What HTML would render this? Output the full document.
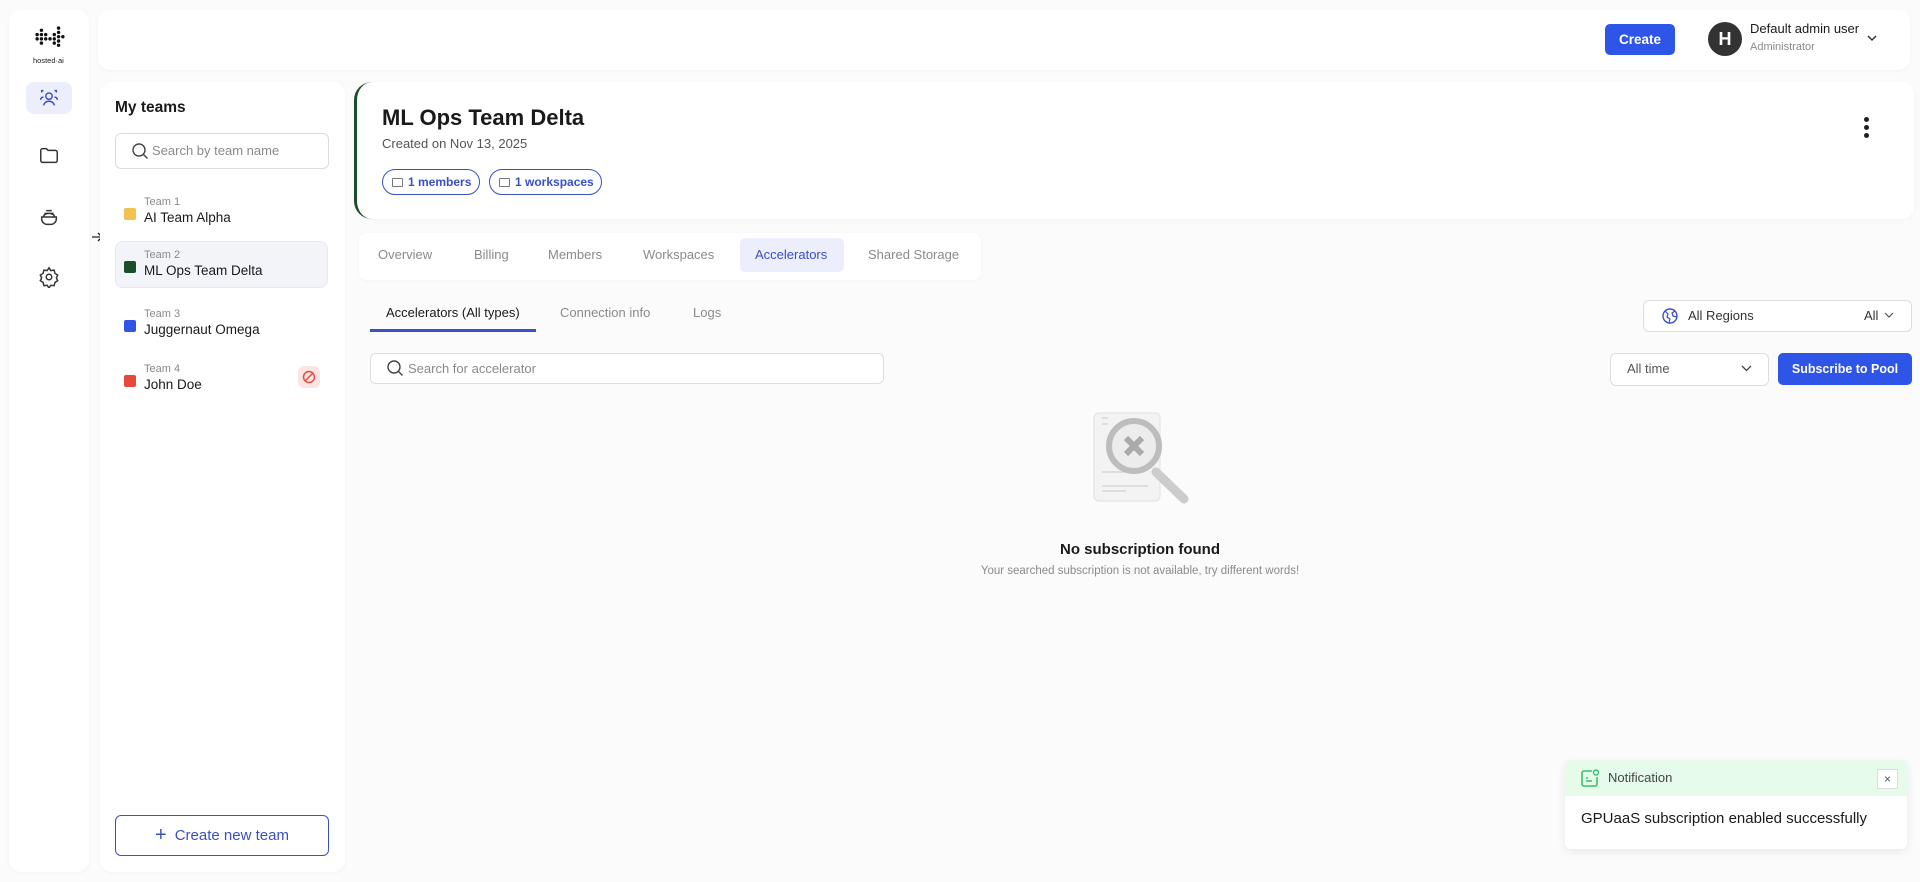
<!DOCTYPE html>
<html><head><meta charset="utf-8"><style>
*{box-sizing:border-box;margin:0;padding:0}
body{width:1920px;height:882px;background:#fbfbfb;font-family:"Liberation Sans",sans-serif;color:#1a1a1a;position:relative;overflow:hidden}
.abs{position:absolute}
.card{position:absolute;background:#fff;border-radius:12px;box-shadow:0 1px 4px rgba(0,0,0,.04)}
.muted{color:#8a8a8a}
.ri{position:absolute;left:26px;width:46px;height:32px;display:flex;align-items:center;justify-content:center;border-radius:8px}
.team{position:absolute;left:115px;width:213px;height:47px;border-radius:8px}
.team .sq{position:absolute;left:9px;top:20px;width:12px;height:12px;border-radius:2px}
.team .t1{position:absolute;left:29px;top:8px;font-size:11px;color:#8a8a8a}
.team .t2{position:absolute;left:29px;top:22px;font-size:13.5px;color:#1a1a1a}
.tab{position:absolute;top:247px;font-size:13px;color:#8a8a8a}
.chip{position:absolute;top:169px;height:26px;border:1px solid #3a4fc8;border-radius:14px;color:#3a4fc8;font-size:12px;font-weight:bold;display:flex;align-items:center;padding-left:9px;gap:5px}
.chip i{display:inline-block;width:11px;height:9px;border:1px solid #777;border-radius:1px}
</style></head><body>
<div class="card" style="left:9px;top:10px;width:80px;height:862px"></div>
<svg class="abs" style="left:32px;top:26px" width="36" height="30" viewBox="0 0 32 28" fill="#111">
<g><circle cx="4" cy="8" r="1.6"/><circle cx="8" cy="4" r="1.6"/><circle cx="8" cy="8" r="1.6"/><circle cx="8" cy="12" r="1.6"/><circle cx="8" cy="16" r="1.6"/><circle cx="12" cy="8" r="1.6"/><circle cx="16" cy="12" r="1.6"/><circle cx="20" cy="8" r="1.6"/><circle cx="20" cy="12" r="1.6"/><circle cx="20" cy="16" r="1.6"/><circle cx="24" cy="2" r="1.6"/><circle cx="24" cy="6" r="1.6"/><circle cx="24" cy="10" r="1.6"/><circle cx="24" cy="14" r="1.6"/><circle cx="24" cy="18" r="1.6"/><circle cx="28" cy="10" r="1.6"/><circle cx="4" cy="12" r="1.6"/><circle cx="12" cy="12" r="1.6"/></g></svg>
<div class="abs" style="left:33px;top:56px;font-size:7.5px;color:#222">hosted·ai</div>
<div class="ri" style="top:82px;background:#eceefb"><svg width="22" height="22" viewBox="0 0 24 24" fill="none" stroke="#3a4fc8" stroke-width="1.6"><circle cx="12" cy="10" r="3.5"/><path d="M6 20c1-3 3.5-4.5 6-4.5s5 1.5 6 4.5M4 6V4h2M20 6V4h-2M3 14c0-2 1-3 3-3M21 14c0-2-1-3-3-3"/></svg></div>
<div class="ri" style="top:139px"><svg width="22" height="22" viewBox="0 0 24 24" fill="none" stroke="#333" stroke-width="1.6"><path d="M3 7a2 2 0 0 1 2-2h4l2 2h8a2 2 0 0 1 2 2v9a2 2 0 0 1-2 2H5a2 2 0 0 1-2-2z"/></svg></div>
<div class="ri" style="top:201px"><svg width="22" height="22" viewBox="0 0 24 24" fill="none" stroke="#333" stroke-width="1.6"><path d="M4 12h16v2a6 6 0 0 1-6 6h-4a6 6 0 0 1-6-6zM6 12a6 4 0 0 1 12 0M7 8h10M9 5h6"/></svg></div>
<div class="ri" style="top:261px"><svg width="22" height="22" viewBox="0 0 24 24" fill="none" stroke="#333" stroke-width="1.6"><circle cx="12" cy="12" r="3"/><path d="M12 2l2 3 3.5-.5 1 3.5 3 2-1.5 3 1.5 3-3 2-1 3.5-3.5-.5-2 3-2-3-3.5.5-1-3.5-3-2 1.5-3-1.5-3 3-2 1-3.5 3.5.5z"/></svg></div>
<svg class="abs" style="left:91px;top:231px" width="16" height="12" viewBox="0 0 16 12"><path d="M1 6h10M7 2l4 4-4 4M14 1v10" stroke="#222" stroke-width="1.3" fill="none"/></svg>
<div class="card" style="left:98px;top:10px;width:1812px;height:60px"></div>
<div class="abs" style="left:1605px;top:24px;width:70px;height:31px;background:#2f55e8;border-radius:5px;color:#fff;font-size:13.5px;font-weight:bold;display:flex;align-items:center;justify-content:center">Create</div>
<div class="abs" style="left:1708px;top:22px;width:34px;height:34px;border-radius:50%;background:#333;color:#fff;font-weight:bold;font-size:18px;display:flex;align-items:center;justify-content:center">H</div>
<div class="abs" style="left:1750px;top:21px;font-size:13px">Default admin user</div>
<div class="abs muted" style="left:1750px;top:41px;font-size:11px">Administrator</div>
<svg class="abs" style="left:1866px;top:34px" width="12" height="8" viewBox="0 0 12 8"><path d="M2 2l4 4 4-4" stroke="#333" stroke-width="1.5" fill="none"/></svg>
<div class="card" style="left:100px;top:82px;width:245px;height:790px"></div>
<div class="abs" style="left:115px;top:99px;font-size:15.5px;font-weight:bold">My teams</div>
<div class="abs" style="left:115px;top:133px;width:214px;height:36px;border:1px solid #ddd;border-radius:6px"></div>
<svg class="abs" style="left:131px;top:142px" width="18" height="18" viewBox="0 0 18 18"><circle cx="8" cy="8" r="6" stroke="#444" stroke-width="1.4" fill="none"/><path d="M12.5 12.5l4 4" stroke="#444" stroke-width="1.4"/></svg>
<div class="abs muted" style="left:152px;top:143px;font-size:13px">Search by team name</div>
<div class="team" style="top:188px"><div class="sq" style="background:#f2c24f"></div><div class="t1">Team 1</div><div class="t2">AI Team Alpha</div></div>
<div class="team" style="top:241px;background:#f2f4fa;border:1px solid #e6e8f0"><div class="sq" style="background:#1b4d2a;left:8px;top:19px"></div><div class="t1" style="left:28px;top:7px">Team 2</div><div class="t2" style="left:28px;top:21px">ML Ops Team Delta</div></div>
<div class="team" style="top:300px"><div class="sq" style="background:#2f55e8"></div><div class="t1">Team 3</div><div class="t2">Juggernaut Omega</div></div>
<div class="team" style="top:355px"><div class="sq" style="background:#e8473c"></div><div class="t1">Team 4</div><div class="t2">John Doe</div>
<div class="abs" style="left:183px;top:11px;width:22px;height:22px;border-radius:6px;background:#fde4e4"><svg width="22" height="22" viewBox="0 0 22 22"><circle cx="11" cy="11" r="5.5" stroke="#e8473c" stroke-width="1.4" fill="none"/><path d="M7 15l8-8" stroke="#e8473c" stroke-width="1.4"/></svg></div></div>
<div class="abs" style="left:115px;top:815px;width:214px;height:41px;border:1px solid #3a4fc8;border-radius:6px;color:#3a4fc8;font-size:15px;display:flex;align-items:center;justify-content:center"><span style="font-size:20px;margin-right:8px">+</span>Create new team</div>
<div class="card" style="left:354px;top:82px;width:1560px;height:137px;border-left:3px solid #1b4d2a;border-radius:18px 12px 12px 18px"></div>
<div class="abs" style="left:382px;top:105px;font-size:22px;font-weight:bold">ML Ops Team Delta</div>
<div class="abs" style="left:382px;top:136px;font-size:13px;color:#555">Created on Nov 13, 2025</div>
<div class="chip" style="left:382px;width:98px"><i></i>1 members</div>
<div class="chip" style="left:489px;width:113px"><i></i>1 workspaces</div>
<div class="abs" style="left:1864px;top:117px;width:5px"><div style="width:5px;height:5px;border-radius:50%;background:#222;margin-bottom:3px"></div><div style="width:5px;height:5px;border-radius:50%;background:#222;margin-bottom:3px"></div><div style="width:5px;height:5px;border-radius:50%;background:#222"></div></div>
<div class="card" style="left:359px;top:233px;width:622px;height:47px;border-radius:8px"></div>
<div class="abs" style="left:740px;top:238px;width:104px;height:34px;background:#eceefb;border-radius:5px"></div>
<div class="tab" style="left:378px">Overview</div>
<div class="tab" style="left:474px">Billing</div>
<div class="tab" style="left:548px">Members</div>
<div class="tab" style="left:643px">Workspaces</div>
<div class="tab" style="left:755px;color:#3a4fc8">Accelerators</div>
<div class="tab" style="left:868px">Shared Storage</div>
<div class="abs" style="left:386px;top:305px;font-size:13px">Accelerators (All types)</div>
<div class="abs muted" style="left:560px;top:305px;font-size:13px">Connection info</div>
<div class="abs muted" style="left:693px;top:305px;font-size:13px">Logs</div>
<div class="abs" style="left:370px;top:329px;width:166px;height:3px;background:#3a4fc8"></div>
<div class="abs" style="left:1643px;top:300px;width:269px;height:32px;border:1px solid #ddd;border-radius:6px;background:#fff"></div>
<svg class="abs" style="left:1661px;top:307px" width="18" height="18" viewBox="0 0 18 18"><circle cx="9" cy="9" r="7" stroke="#3a4fc8" stroke-width="1.4" fill="none"/><path d="M4 4l3 3-1 3 3 2-1 4M14 4l-3 2 1 3 4 1" stroke="#3a4fc8" stroke-width="1.2" fill="none"/></svg>
<div class="abs" style="left:1688px;top:308px;font-size:13px;color:#333">All Regions</div>
<div class="abs" style="left:1864px;top:308px;font-size:13px;color:#333">All</div>
<svg class="abs" style="left:1884px;top:312px" width="10" height="7" viewBox="0 0 10 7"><path d="M1 1l4 4 4-4" stroke="#555" stroke-width="1.2" fill="none"/></svg>
<div class="abs" style="left:370px;top:353px;width:514px;height:31px;border:1px solid #ddd;border-radius:6px;background:#fff"></div>
<svg class="abs" style="left:386px;top:359px" width="18" height="18" viewBox="0 0 18 18"><circle cx="8" cy="8" r="6" stroke="#444" stroke-width="1.4" fill="none"/><path d="M12.5 12.5l4 4" stroke="#444" stroke-width="1.4"/></svg>
<div class="abs muted" style="left:408px;top:361px;font-size:13px">Search for accelerator</div>
<div class="abs" style="left:1610px;top:353px;width:159px;height:33px;border:1px solid #ddd;border-radius:6px;background:#fff"></div>
<div class="abs" style="left:1627px;top:361px;font-size:13px;color:#555">All time</div>
<svg class="abs" style="left:1741px;top:365px" width="11" height="7" viewBox="0 0 11 7"><path d="M1 1l4.5 4.5L10 1" stroke="#444" stroke-width="1.3" fill="none"/></svg>
<div class="abs" style="left:1778px;top:353px;width:134px;height:32px;background:#2f55e8;border-radius:5px;color:#fff;font-size:12.5px;font-weight:bold;display:flex;align-items:center;justify-content:center">Subscribe to Pool</div>
<svg class="abs" style="left:1090px;top:410px" width="100" height="95" viewBox="0 0 100 95">
<rect x="4" y="3" width="66" height="88" rx="5" fill="#f3f3f3" stroke="#e0e0e0"/>
<path d="M12 62h22M12 76h46M12 81h24M12 8h6M12 14h6" stroke="#ddd" stroke-width="2"/>
<path d="M66 62l28 27" stroke="#ccc" stroke-width="9" stroke-linecap="round"/>
<circle cx="44" cy="36" r="25" fill="#ececec" stroke="#bdbdbd" stroke-width="6"/>
<path d="M36 28l16 16M52 28L36 44" stroke="#aaa" stroke-width="6"/>
</svg>
<div class="abs" style="left:960px;top:541px;width:360px;text-align:center;font-size:15px;font-weight:bold">No subscription found</div>
<div class="abs muted" style="left:900px;top:565px;width:480px;text-align:center;font-size:11.5px">Your searched subscription is not available, try different words!</div>
<div class="abs" style="left:1565px;top:760px;width:342px;height:89px;background:#fff;border-radius:6px;box-shadow:0 3px 10px rgba(0,0,0,.08);overflow:hidden">
<div style="height:36px;background:#e6fbe9;position:relative">
<svg class="abs" style="left:15px;top:9px" width="20" height="19" viewBox="0 0 20 19"><path d="M12 2H4a2 2 0 0 0-2 2v11a2 2 0 0 0 2 2h11a2 2 0 0 0 2-2V8" stroke="#35c26a" stroke-width="1.6" fill="none"/><circle cx="16" cy="3.5" r="2.5" stroke="#35c26a" stroke-width="1.4" fill="none"/><path d="M6 9h2M6 12h6" stroke="#35c26a" stroke-width="1.5"/></svg>
<div class="abs" style="left:43px;top:10px;font-size:13px;color:#444">Notification</div>
<div class="abs" style="left:312px;top:9px;width:21px;height:20px;border:1px solid #ddd;background:#fff;font-size:12px;color:#555;text-align:center;line-height:18px">×</div>
</div>
<div style="padding:14px 0 0 16px;font-size:15px;color:#1a1a1a">GPUaaS subscription enabled successfully</div>
</div>
</body></html>
